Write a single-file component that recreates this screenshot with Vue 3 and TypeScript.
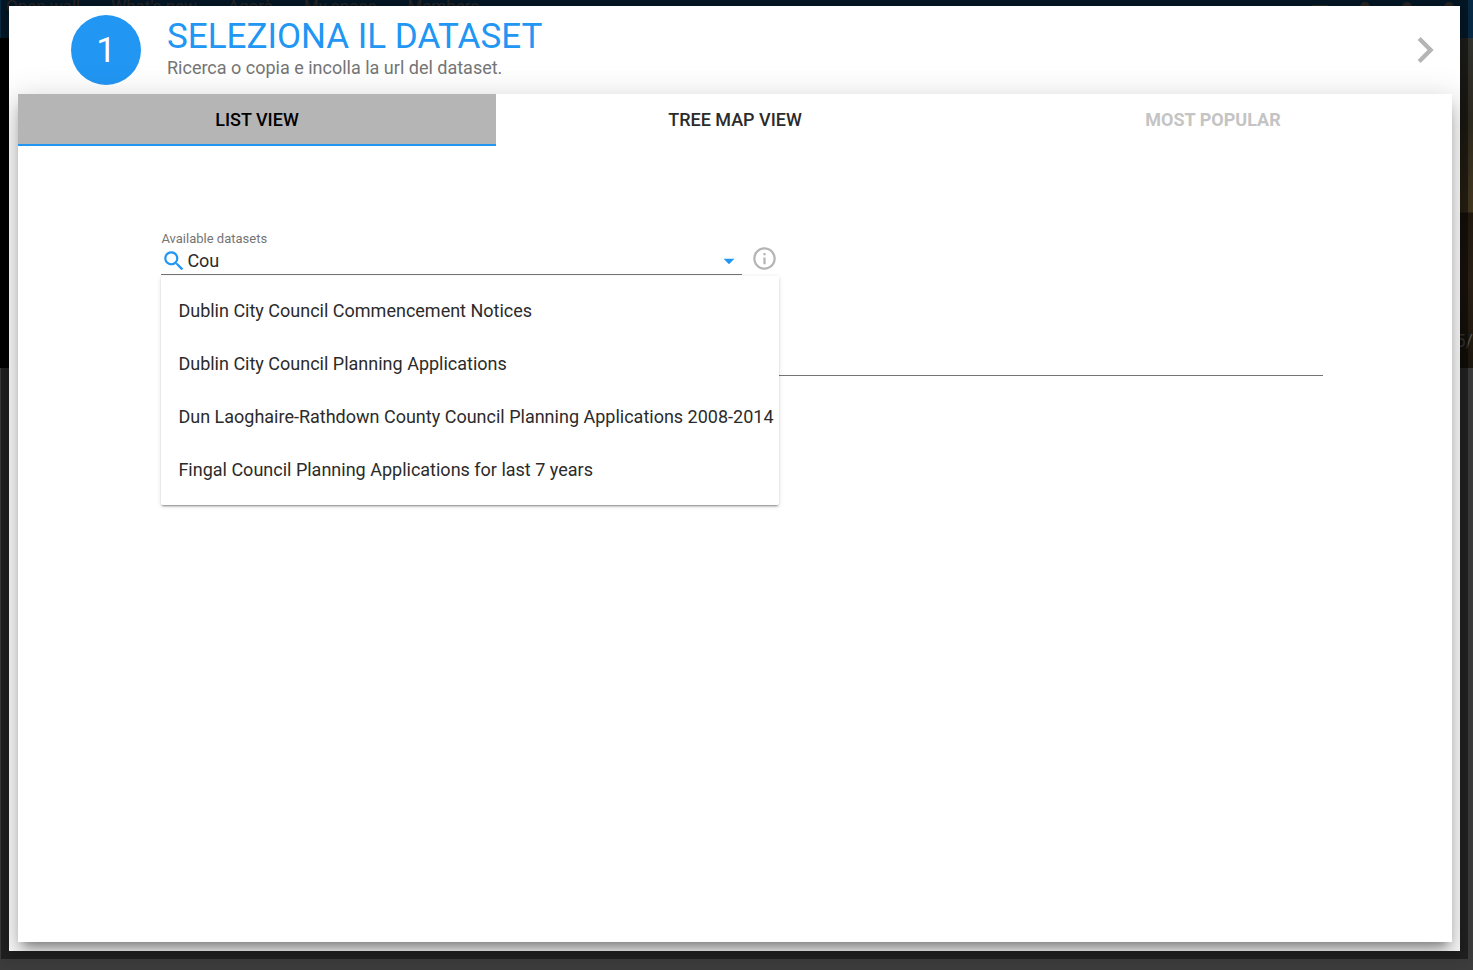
<script setup lang="ts">
import { ref } from 'vue'

const query = ref('Cou')
const active = ref(0)
const navLinks = ['Open wall', "What's new", 'Agorà', 'My space', 'Members']
const tabs = [
  { label: 'LIST VIEW', disabled: false },
  { label: 'TREE MAP VIEW', disabled: false },
  { label: 'MOST POPULAR', disabled: true },
]
const datasets = [
  'Dublin City Council Commencement Notices',
  'Dublin City Council Planning Applications',
  'Dun Laoghaire-Rathdown County Council Planning Applications 2008-2014',
  'Fingal Council Planning Applications for last 7 years',
]
</script>

<template>
  <div class="page">
    <div class="backdrop" aria-hidden="true">
      <div class="site-nav">
        <span v-for="link in navLinks" :key="link">{{ link }}</span>
        <i class="dash"></i><i class="dot"></i><i class="dot"></i><i class="dot"></i>
      </div>
      <div class="banner"><span>5/</span></div>
    </div>

    <div class="dialog" role="dialog" aria-labelledby="step-title">
      <header class="step">
        <div class="badge">1</div>
        <div class="heading">
          <h1 id="step-title">SELEZIONA IL DATASET</h1>
          <p>Ricerca o copia e incolla la url del dataset.</p>
        </div>
        <button class="next" type="button" aria-label="Next">
          <svg viewBox="0 0 24 24"><path d="M10 6 8.59 7.41 13.17 12l-4.58 4.59L10 18l6-6z" /></svg>
        </button>
      </header>

      <main class="card">
        <div class="tabs" role="tablist">
          <button
            v-for="(tab, i) in tabs"
            :key="tab.label"
            type="button"
            role="tab"
            class="tab"
            :class="{ selected: active === i }"
            :aria-selected="active === i"
            :disabled="tab.disabled"
            @click="active = i"
          >{{ tab.label }}</button>
        </div>

        <div class="form">
          <label class="caption" for="search">Available datasets</label>
          <div class="search-row">
            <div class="combo">
              <svg class="magnifier" viewBox="0 0 24 24"><path d="M15.5 14h-.79l-.28-.27C15.41 12.59 16 11.11 16 9.5 16 5.91 13.09 3 9.5 3S3 5.91 3 9.5 5.91 16 9.5 16c1.61 0 3.09-.59 4.23-1.57l.27.28v.79l5 4.99L20.49 19l-4.99-5zm-6 0C7.01 14 5 11.99 5 9.5S7.01 5 9.5 5 14 7.01 14 9.5 11.99 14 9.5 14z" /></svg>
              <input id="search" v-model="query" type="text" autocomplete="off" />
              <button class="toggle" type="button" aria-label="Show datasets">
                <svg viewBox="0 0 24 24"><path d="M7 10l5 5 5-5z" /></svg>
              </button>
              <ul class="menu">
                <li v-for="name in datasets" :key="name">
                  <button type="button" @click="query = name">{{ name }}</button>
                </li>
              </ul>
            </div>
            <button class="info" type="button" aria-label="Information">
              <svg viewBox="0 0 24 24"><path d="M11 17h2v-6h-2v6zm1-15C6.48 2 2 6.48 2 12s4.48 10 10 10 10-4.48 10-10S17.52 2 12 2zm0 18c-4.41 0-8-3.59-8-8s3.59-8 8-8 8 3.59 8 8-3.59 8-8 8zM11 9h2V7h-2v2z" /></svg>
            </button>
          </div>
          <input class="url" type="text" aria-label="Dataset URL" />
        </div>
      </main>
    </div>
  </div>
</template>

<style>
html,
body {
  background: #3c3c3c;
}
body {
  margin: 0;
}
</style>

<style scoped>
* {
  box-sizing: border-box;
}
.page {
  position: relative;
  height: 100vh;
  overflow: hidden;
  padding: 6px 13px 19px 9px;
  font-family: Roboto, sans-serif;
  color: #2b2b2b;
}
button,
input {
  font: inherit;
  color: inherit;
  border: 0;
  padding: 0;
  background: none;
  outline: 0;
}
button {
  cursor: pointer;
}
svg {
  display: block;
  fill: currentColor;
}
.backdrop {
  position: absolute;
  inset: 0;
}
.site-nav {
  display: flex;
  align-items: flex-start;
  gap: 31px;
  height: 38px;
  padding: 0 19px 0 6px;
  background: #082a44;
  color: #4a4440;
  font: 17px/12px Roboto, sans-serif;
}
.dot {
  width: 10px;
  height: 10px;
  margin: 2px 0 0 1px;
  border-radius: 50%;
  background: #4a4440;
}
.dash {
  width: 16px;
  height: 1px;
  margin: 5px 0 0 auto;
  background: #4a4440;
}
.banner {
  height: 330px;
  padding-top: 291px;
  text-align: right;
  color: #565656;
  background: linear-gradient(90deg, #000 50%, transparent 50%), linear-gradient(#32332f 0, #2e2a20 80px, #44371f 174px, #211910 175px, #2b2016 240px, #1d180f 330px);
  font: 18px/24px Roboto, sans-serif;
}
.dialog {
  position: relative;
  display: flex;
  flex-direction: column;
  height: 100%;
  padding: 0 8px 9px 9px;
  background: #fff;
  box-shadow: 0 0 0 8px rgba(0, 0, 0, 0.45), 0 2px 12px 4px rgba(0, 0, 0, 0.2);
}
.step {
  display: flex;
  align-items: center;
  flex: 0 0 88px;
  padding: 0 1px 0 53px;
}
.badge {
  width: 70px;
  height: 70px;
  border-radius: 50%;
  background: #2196f3;
  color: #fff;
  font-size: 35px;
  line-height: 71px;
  text-align: center;
}
.heading {
  flex: 1;
  margin-left: 26px;
  padding-bottom: 4px;
}
h1 {
  margin: 0;
  color: #2196f3;
  font-size: 35px;
  font-weight: 400;
  line-height: 40px;
}
p {
  margin: 0;
  color: #757575;
  font-size: 18px;
  line-height: 22px;
}
.next {
  color: #b5b5b5;
}
.next svg {
  width: 52px;
  height: 52px;
}
.card {
  flex: 1;
  background: #fff;
  box-shadow: 0 16px 24px 2px rgba(0, 0, 0, 0.14), 0 6px 30px 5px rgba(0, 0, 0, 0.12), 0 8px 10px -5px rgba(0, 0, 0, 0.4);
  clip-path: inset(-88px -8px -9px -9px);
}
.tabs {
  display: grid;
  grid-template-columns: repeat(3, 1fr);
}
.tab {
  height: 52px;
  border-bottom: 2px solid transparent;
  font-size: 18px;
  font-weight: 500;
}
.tab.selected {
  border-color: #2196f3;
  background: #b5b5b5;
  color: #000;
}
.tab:disabled {
  color: #c4c4c4;
  font-weight: 700;
}
.form {
  padding: 84px 9% 0 10%;
}
.caption {
  display: block;
  color: #757575;
  font-size: 13px;
  line-height: 17px;
}
.search-row {
  display: flex;
  align-items: flex-start;
  gap: 9px;
}
.combo {
  position: relative;
  display: flex;
  align-items: center;
  width: 50%;
  height: 28px;
  border-bottom: 1px solid #757575;
}
.magnifier {
  width: 26px;
  height: 26px;
  color: #2196f3;
}
.combo input {
  flex: 1;
  min-width: 0;
  font-size: 18px;
}
.toggle {
  color: #2196f3;
}
.toggle svg {
  width: 26px;
  height: 26px;
}
.info {
  margin-top: -2px;
  color: #b5b5b5;
}
.info svg {
  width: 27px;
  height: 27px;
}
.menu {
  position: absolute;
  top: 29px;
  left: 0;
  z-index: 2;
  margin: 0;
  padding: 8px 0 9px;
  list-style: none;
  background: #fff;
  border-radius: 2px;
  box-shadow: 0 2px 2px 0 rgba(0, 0, 0, 0.14), 0 1px 5px 0 rgba(0, 0, 0, 0.12), 0 3px 1px -2px rgba(0, 0, 0, 0.2);
}
.menu button {
  display: block;
  width: 100%;
  height: 53px;
  padding: 0 5px 0 17px;
  font-size: 18px;
  text-align: left;
  white-space: nowrap;
}
.url {
  display: block;
  width: 100%;
  height: 28px;
  margin-top: 73px;
  border-bottom: 1px solid #757575;
}
</style>
